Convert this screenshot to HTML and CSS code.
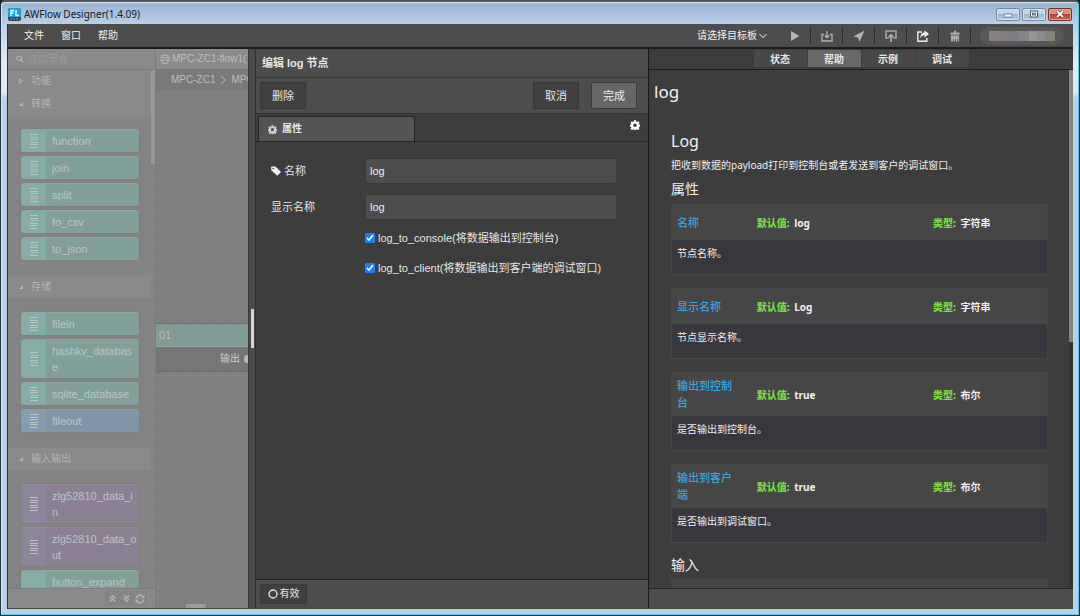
FILE: index.html
```html
<!DOCTYPE html>
<html lang="zh-CN">
<head>
<meta charset="utf-8">
<title>AWFlow Designer(1.4.09)</title>
<link rel="stylesheet" href="styles.css">
</head>
<body>
<svg class="defs" aria-hidden="true">
  <symbol id="gear" viewBox="0 0 16 16"><path fill="currentColor" fill-rule="evenodd" d="M6.300 .5h3.400l.4 2.200 1 .4 1.800-1.200 2.300 2.300-1.200 1.800.4 1 2.100.4v3.200l-2.100.4-.4 1 1.200 1.800-2.300 2.300-1.800-1.200-1 .4-.4 2.200H6.300l-.4-2.200-1-.4-1.800 1.200L.8 13.800 2 12l-.4-1-1.600-.4V7.400L1.600 7 2 6 .8 4.200l2.300-2.300 1.800 1.200 1-.4zM8 5.400a2.800 2.800 0 1 0 0 5.600 2.800 2.800 0 0 0 0-5.600z"/></symbol>
  <symbol id="grip" viewBox="0 0 8 14"><path stroke="currentColor" d="M0 .5h8M0 3.500h8M0 5.500h8M0 8.500h8M0 10.500h8M0 13.500h8"/></symbol>
</svg>
<div class="window">
  <header class="titlebar">
    <svg class="app-logo" viewBox="0 0 13 13" aria-hidden="true"><rect width="13" height="13" rx="2" fill="#3a4650"/><path d="M2 0h9a2 2 0 0 1 2 2v7H0V2a2 2 0 0 1 2-2z" fill="#17a3dc"/><path d="M3 8V2.500h3M3 5h2.500M8 2v5.500h3" stroke="#fff" stroke-width="1.300" fill="none"/><path d="M2 11h9" stroke="#8d969c" stroke-dasharray="2 1"/></svg>
    <span class="title">AWFlow Designer(1.4.09)</span>
    <button class="win-btn" aria-label="最小化"><svg viewBox="0 0 12 8"><rect x="2" y="4" width="8" height="3" rx="1" fill="#fff" stroke="#5b6470" stroke-width=".8"/></svg></button>
    <button class="win-btn" aria-label="最大化"><svg viewBox="0 0 12 8"><rect x="2.500" y="1" width="7" height="6" fill="#fff" stroke="#4d5662"/><rect x="4.500" y="3" width="3" height="2" fill="#8fa9c4" stroke="#4d5662" stroke-width=".8"/></svg></button>
    <button class="win-btn close" aria-label="关闭"><svg viewBox="0 0 12 8"><path d="M3 1l6 6M9 1L3 7" stroke="#5a2a28" stroke-width="3"/><path d="M3 1l6 6M9 1L3 7" stroke="#fff" stroke-width="1.800"/></svg></button>
  </header>
  <div class="app">
    <nav class="menubar">
      <button class="menu">文件</button>
      <button class="menu">窗口</button>
      <button class="menu">帮助</button>
      <button class="target">请选择目标板 <svg viewBox="0 0 8 6"><path d="M.5 1L4 4.700 7.500 1" stroke="currentColor" fill="none"/></svg></button>
      <button class="tool" aria-label="运行"><svg viewBox="0 0 12 12"><path d="M2 1l8.500 5L2 11z" fill="#b5b5b5"/></svg></button>
      <button class="tool" aria-label="下载"><svg viewBox="0 0 12 12"><path d="M3 4.500H1v6.500h10V4.500H9M6 1v6.500M3.800 5.500L6 7.700l2.200-2.200" fill="none" stroke="#b5b5b5" stroke-width="1.300"/></svg></button>
      <button class="tool" aria-label="发送"><svg viewBox="0 0 12 12"><path d="M11.500.5L.5 6.500l4.500 1 1.500 4.500z" fill="#b5b5b5"/></svg></button>
      <button class="tool" aria-label="上传"><svg viewBox="0 0 12 12"><path d="M4 8H1V1h10v7H8" fill="none" stroke="#a5a5a5" stroke-width="1.600"/><path d="M6 12V5M3.800 7L6 4.800l2.200 2.200" fill="none" stroke="#b5b5b5" stroke-width="1.600"/></svg></button>
      <button class="tool" aria-label="分享"><svg viewBox="0 0 12 12"><path d="M5 2H.8v9.200h9V8" fill="none" stroke="#eee" stroke-width="1.400"/><path d="M7.500.3L12 4 7.500 7.500V5.300C5.500 5.300 4.300 6.500 3.500 8.500 3.300 5 4.500 2.700 7.500 2.500z" fill="#eee"/></svg></button>
      <button class="tool" aria-label="清空"><svg viewBox="0 0 12 12"><path d="M5 .5h2v2h3.500v2.300h-9V2.500H5zM2 5.500h8v6H8.700V9H8v2.500H6.600V9H6v2.500H4.600V9H4v2.500H2z" fill="#aaa"/></svg></button>
      <div class="account"><span class="mosaic"></span></div>
    </nav>
    <main class="workspace">
      <aside class="palette">
        <label class="search"><svg viewBox="0 0 10 10"><circle cx="4" cy="4" r="2.800" fill="none" stroke="currentColor" stroke-width="1.400"/><path d="M6 6l3 3" stroke="currentColor" stroke-width="1.600"/></svg><input type="search" placeholder="过滤节点" aria-label="过滤节点"></label>
        <div class="categories">
          <section>
            <h2 class="cat"><svg viewBox="0 0 6 6"><path d="M1.500 .8L4.500 3 1.500 5.200z" fill="none" stroke="currentColor"/></svg>功能</h2>
          </section>
          <section>
            <h2 class="cat"><svg viewBox="0 0 6 6"><path d="M5 1v4H1z" fill="currentColor"/></svg>转换</h2>
            <div class="nodes">
              <div class="node"><span class="grip"><svg><use href="#grip"/></svg></span><span class="name">function</span></div>
              <div class="node"><span class="grip"><svg><use href="#grip"/></svg></span><span class="name">join</span></div>
              <div class="node"><span class="grip"><svg><use href="#grip"/></svg></span><span class="name">split</span></div>
              <div class="node"><span class="grip"><svg><use href="#grip"/></svg></span><span class="name">to_csv</span></div>
              <div class="node"><span class="grip"><svg><use href="#grip"/></svg></span><span class="name">to_json</span></div>
            </div>
          </section>
          <section>
            <h2 class="cat"><svg viewBox="0 0 6 6"><path d="M5 1v4H1z" fill="currentColor"/></svg>存储</h2>
            <div class="nodes">
              <div class="node"><span class="grip"><svg><use href="#grip"/></svg></span><span class="name">filein</span></div>
              <div class="node"><span class="grip"><svg><use href="#grip"/></svg></span><span class="name">hashkv_database</span></div>
              <div class="node"><span class="grip"><svg><use href="#grip"/></svg></span><span class="name">sqlite_database</span></div>
              <div class="node blue"><span class="grip"><svg><use href="#grip"/></svg></span><span class="name">fileout</span></div>
            </div>
          </section>
          <section>
            <h2 class="cat"><svg viewBox="0 0 6 6"><path d="M5 1v4H1z" fill="currentColor"/></svg>输入输出</h2>
            <div class="nodes">
              <div class="node purple"><span class="grip"><svg><use href="#grip"/></svg></span><span class="name">zlg52810_data_in</span></div>
              <div class="node purple"><span class="grip"><svg><use href="#grip"/></svg></span><span class="name">zlg52810_data_out</span></div>
              <div class="node"><span class="grip"></span><span class="name">button_expand</span></div>
            </div>
          </section>
          <span class="thumb"></span>
        </div>
        <footer class="palette-foot">
          <button aria-label="全部折叠"><svg viewBox="0 0 10 10"><path d="M2 5l3-3 3 3M2 8.500l3-3 3 3" fill="none" stroke="currentColor" stroke-width="1.700"/></svg></button>
          <button aria-label="全部展开"><svg viewBox="0 0 10 10"><path d="M2 1.500l3 3 3-3M2 5l3 3 3-3" fill="none" stroke="currentColor" stroke-width="1.700"/></svg></button>
          <button class="refresh" aria-label="刷新"><svg viewBox="0 0 10 10"><path d="M1.200 4.300A3.800 3.800 0 0 1 8 2.800M8.800 5.700A3.800 3.800 0 0 1 2 7.200" fill="none" stroke="currentColor" stroke-width="1.700"/><path d="M9.500.8v3.400H6.100zM.5 9.200V5.800h3.400z" fill="currentColor"/></svg></button>
        </footer>
      </aside>
      <section class="flow">
        <div class="flow-tab"><svg viewBox="0 0 10 10"><path d="M2.500 3.500a2 2 0 0 1 0-2.500h5a2 2 0 0 1 0 2.500M0 3.800h10M0 6.200h10M2.500 6.500a2 2 0 0 0 0 2.800h5a2 2 0 0 0 0-2.800" fill="none" stroke="currentColor"/></svg>MPC-ZC1-flow1(1</div>
        <div class="crumbs"><span>MPC-ZC1</span><svg viewBox="0 0 6 10"><path d="M1 1l4 4-4 4" fill="none" stroke="currentColor"/></svg><span>MPC</span></div>
        <div class="canvas">
          <div class="flow-node"><div class="flow-head">01</div><div class="flow-port">输出<i></i></div></div>
          <span class="hthumb"></span>
        </div>
      </section>
      <div class="splitter"><span></span></div>
      <section class="tray">
        <h1 class="tray-title">编辑 log 节点</h1>
        <div class="actions">
          <button class="btn">删除</button>
          <button class="btn cancel">取消</button>
          <button class="btn primary">完成</button>
        </div>
        <div class="tray-tabs">
          <button class="tray-tab"><svg><use href="#gear"/></svg>属性</button>
          <button class="gear-btn" aria-label="设置"><svg><use href="#gear"/></svg></button>
        </div>
        <form class="form">
          <div class="row"><label for="name"><svg viewBox="0 0 10 10"><path d="M0 1.500Q0 .5 1 .5h3.500L10 6 6.300 9.800.5 4.500z" fill="#eee"/><circle cx="2.200" cy="2.500" r=".8" fill="#3d3d3d"/></svg>名称</label><input id="name" type="text" value="log"></div>
          <div class="row"><label for="display">显示名称</label><input id="display" type="text" value="log"></div>
          <label class="check"><input type="checkbox" checked>log_to_console(将数据输出到控制台)</label>
          <label class="check"><input type="checkbox" checked>log_to_client(将数据输出到客户端的调试窗口)</label>
        </form>
        <footer class="tray-foot"><button class="valid"><svg viewBox="0 0 10 10"><circle cx="5" cy="5" r="4" fill="none" stroke="currentColor" stroke-width="1.300"/></svg>有效</button></footer>
      </section>
      <aside class="side">
        <nav class="side-tabs"><button>状态</button><button class="active">帮助</button><button>示例</button><button>调试</button></nav>
        <div class="help">
          <h1>log</h1>
          <article>
            <h2>Log</h2>
            <p>把收到数据的payload打印到控制台或者发送到客户的调试窗口。</p>
            <h3>属性</h3>
            <div class="props">
              <table><thead><tr><th class="c1">名称</th><th class="c2"><b>默认值:</b> log</th><th><b>类型:</b> 字符串</th></tr></thead><tbody><tr><td colspan="3">节点名称。</td></tr></tbody></table>
              <table><thead><tr><th class="c1">显示名称</th><th class="c2"><b>默认值:</b> Log</th><th><b>类型:</b> 字符串</th></tr></thead><tbody><tr><td colspan="3">节点显示名称。</td></tr></tbody></table>
              <table><thead><tr><th class="c1">输出到控制台</th><th class="c2"><b>默认值:</b> true</th><th><b>类型:</b> 布尔</th></tr></thead><tbody><tr><td colspan="3">是否输出到控制台。</td></tr></tbody></table>
              <table><thead><tr><th class="c1">输出到客户端</th><th class="c2"><b>默认值:</b> true</th><th><b>类型:</b> 布尔</th></tr></thead><tbody><tr><td colspan="3">是否输出到调试窗口。</td></tr></tbody></table>
            </div>
            <h3 class="inputs">输入</h3>
            <div class="next"></div>
          </article>
          <span class="track"><span class="thumb"></span></span>
        </div>
        <footer class="side-foot"></footer>
      </aside>
    </main>
  </div>
</div>
</body>
</html>
```
FILE: styles.css
```css
* { box-sizing: border-box; }
body { margin: 0; background: #1b2026; font: 11px/16px "Liberation Sans", "Noto Sans CJK SC", sans-serif; color: #e6e6e6; }
h1, h2, h3, p { margin: 0; font-weight: normal; }
button { font: inherit; color: inherit; border: 0; padding: 0; background: none; }
svg { display: block; flex: none; }
.defs { position: absolute; width: 0; height: 0; }

.window { height: 100vh; display: flex; flex-direction: column; padding: 0 6px 6px; border: 1px solid #20303c; border-top: 2px solid #4f545a; border-radius: 5px 5px 0 0; background: linear-gradient(#98b2cf, #b9d0ea 22px, #e2ebf5 60px, #dfe9f4 90px, #b9d1ea 96px); box-shadow: inset -1px -1px #54c8e4, inset 1px 1px #dce6f1; }
.titlebar { flex: none; height: 22px; display: flex; align-items: center; gap: 2px; padding: 2px 1px 0 1px; color: #14181d; font: 10px/16px "Noto Sans", "Noto Sans CJK SC", sans-serif; }
.app-logo { width: 13px; height: 13px; margin-right: 1px; }
.title { flex: 1; }
.win-btn { width: 24px; height: 13px; display: grid; place-items: center; border: 1px solid #7188a2; border-radius: 2px; background: linear-gradient(#c3d5e8 50%, #9fb8d2 50%, #b5cce3); box-shadow: inset 0 0 0 1px #d5e2ef; }
.win-btn svg { width: 12px; height: 8px; }
.win-btn.close { background: linear-gradient(#d99184 50%, #b6432f 50%, #cc6b52); border-color: #70302c; box-shadow: inset 0 0 0 1px #dda296; }

.app { flex: 1; min-height: 0; display: flex; flex-direction: column; background: #4d4d4d; border-left: 1px solid #303030; }
.menubar { flex: none; height: 25px; display: flex; align-items: center; background: #4d4d4d; border-bottom: 2px solid #1c1c1c; padding: 0 9px 0 16px; font-size: 10px; color: #f2f2f2; }
.menu { margin-right: 17px; }
.target { margin: 0 12px 0 auto; display: flex; align-items: center; gap: 2px; }
.target svg { width: 8px; height: 6px; }
.tool { width: 32px; height: 17px; display: grid; place-items: center; border-right: 1px solid #2c2c2c; }
.tool svg { width: 12px; height: 12px; }
.account { width: 84px; height: 18px; margin-left: 9px; display: grid; place-items: center; background: #585858; border-radius: 9px; }
.mosaic { width: 66px; height: 10px; background: linear-gradient(90deg, #85817f 0 15%, #857b82 15% 30%, #817c84 30% 45%, #858585 45% 60%, #969690 60% 72%, #8a8d8e 72% 86%, #85857c 86%); }

.workspace { flex: 1; min-height: 0; display: grid; grid-template-columns: 148px 92px 8px minmax(0, 393fr) minmax(0, 424fr); border-bottom: 1px solid #454545; }

.palette { display: flex; flex-direction: column; min-height: 0; background: #848484; color: #b4b4b4; font-size: 10px; border-right: 1px solid #7c7c7c; }
.search { flex: none; height: 21px; display: flex; align-items: center; gap: 4px; padding-left: 8px; background: #8a8a8a; border-bottom: 1px solid #7a7a7a; }
.search svg { width: 8px; height: 8px; }
.search input { flex: 1; min-width: 0; border: 0; padding: 0; background: none; font: inherit; outline: 0; }
.search input::placeholder { color: #9b9b9b; }
.categories { flex: 1; min-height: 0; overflow: hidden; position: relative; padding-right: 4px; }
.cat { height: 23px; display: flex; align-items: center; gap: 10px; padding-left: 10px; background: #8a8a8a; border-bottom: 1px solid #858585; font-size: 10px; }
.cat:first-child svg { margin-right: -3px; }
.cat svg { width: 6px; height: 6px; }
.cat { gap: 7px; padding-left: 10px; }
.cat:first-child svg { margin-right: 0; }
.nodes { display: flex; flex-direction: column; gap: 4px; padding: 13px 12px 16px 13px; }
.node { display: flex; border-radius: 3px; overflow: hidden; background: #81a09a; box-shadow: 0 0 2px #777; font-size: 11px; border-top: 1px solid #8aa9a3; color: #bcc2c0; }
.grip { flex: none; width: 25px; display: grid; place-items: center; background: #85aca6; }
.grip svg { width: 8px; height: 14px; }
.name { flex: 1; padding: 3px 2px 3px 6px; word-break: break-all; }
.blue { background: #8096a6; border-color: #8aa0b0; }
.blue .grip { background: #839db1; }
.purple { background: #8b8193; border-color: #958b9e; }
.purple .grip { background: #8d869b; }
.categories .thumb { position: absolute; top: 0; right: 0; width: 4px; height: 94px; background: #999; }
.palette-foot { flex: none; height: 20px; display: flex; justify-content: flex-end; align-items: center; padding-right: 8px; background: #8a8a8a; border-top: 1px solid #7c7c7c; color: #b0b0b0; }
.palette-foot button { width: 14px; height: 15px; display: grid; place-items: center; background: #858585; }
.palette-foot svg { width: 9px; height: 9px; }
.palette-foot .refresh svg { width: 10px; height: 10px; }

.flow { min-width: 0; min-height: 0; display: flex; flex-direction: column; overflow: hidden; color: #bcbcbc; font-size: 10px; white-space: nowrap; }
.flow-tab { flex: none; height: 21px; display: flex; align-items: center; gap: 2px; padding-left: 4px; background: #8b8b8b; border-bottom: 1px solid #777; }
.flow-tab svg { width: 10px; height: 10px; }
.crumbs { flex: none; height: 20px; display: flex; align-items: center; gap: 5px; padding-left: 15px; background: #7a7a7a; }
.crumbs svg { width: 6px; height: 10px; }
.canvas { flex: 1; position: relative; background: repeating-linear-gradient(90deg, transparent 0 1px, #848484 1px 2px, transparent 2px 16px), repeating-linear-gradient(transparent 0 13px, #848484 13px 14px, transparent 14px 16px), #7f7f7f; }
.flow-node { position: absolute; top: 233px; left: 0; right: 0; border-top: 1px solid #6d6d6d; border-bottom: 1px solid #6d6d6d; background: #767676; }
.flow-head { height: 23px; padding: 3px 3px; background: #819b96; border-bottom: 1px solid #8fa9a3; font-size: 11px; }
.flow-port { height: 24px; display: flex; align-items: center; justify-content: flex-end; gap: 4px; overflow: hidden; color: #ccc; }
.flow-port i { width: 8px; height: 8px; border-radius: 50%; background: #bbb; margin-right: -4px; }
.hthumb { position: absolute; bottom: 0; left: 30px; width: 20px; height: 4px; background: #9c9c9c; }
.splitter { display: flex; align-items: center; justify-content: center; background: #4b4b4b; border-left: 1px solid #393939; border-right: 1px solid #303030; }
.splitter span { width: 3px; height: 39px; background: #d4d4d4; }

.tray { min-width: 0; display: flex; flex-direction: column; background: #3d3d3d; border-right: 1px solid #1a1a1a; }
.tray-title { height: 29px; padding: 6px; background: #4d4d4d; border-bottom: 1px solid #3a3a3a; font-size: 11px; line-height: 16px; font-weight: bold; }
.actions { height: 36px; display: flex; align-items: center; gap: 12px; padding: 0 11px 0 4px; background: #4d4d4d; border-bottom: 1px solid #333; }
.btn { width: 46px; height: 27px; background: #404040; border: 1px solid #363636; border-radius: 2px; }
.cancel { margin-left: auto; }
.primary { background: #666; border-color: #3a3a3a; color: #f2f2f2; }
.tray-tabs { height: 28px; display: flex; align-items: flex-end; justify-content: space-between; padding: 0 2px; border-bottom: 1px solid #282828; }
.tray-tab { width: 157px; height: 25px; display: flex; align-items: center; gap: 5px; padding-left: 9px; background: #545454; border: 1px solid #242424; border-bottom: 0; font-size: 10px; font-weight: bold; }
.tray-tab svg { width: 9px; height: 9px; color: #ccc; }
.gear-btn { align-self: flex-start; width: 23px; height: 22px; display: grid; place-items: center; border: 1px solid #393939; color: #fff; }
.gear-btn svg { width: 10px; height: 10px; }
.form { flex: 1; padding: 16px 31px 0 15px; display: flex; flex-direction: column; }
.row { display: flex; align-items: center; height: 26px; margin-bottom: 10px; }
.row label { flex: none; width: 94px; display: flex; align-items: center; gap: 3px; }
.row svg { width: 10px; height: 10px; }
.row input { flex: 1; min-width: 0; height: 26px; padding: 0 4px; border: 1px solid #3a3a3a; border-radius: 3px; background: #4d4d4d; color: #eee; font: inherit; }
.check { display: flex; align-items: center; gap: 3px; height: 16px; margin: 0 0 14px 94px; white-space: nowrap; }
.check input { width: 10px; height: 10px; margin: 0; accent-color: #0f80ff; }
.tray-foot { height: 29px; padding: 4px; background: #4d4d4d; border-top: 1px solid #222; }
.valid { width: 47px; height: 20px; display: flex; align-items: center; justify-content: center; gap: 2px; background: #404040; border: 1px solid #3a3a3a; border-radius: 2px; font-size: 10px; }
.valid svg { width: 10px; height: 10px; }

.side { min-width: 0; min-height: 0; display: flex; flex-direction: column; background: #3d3d3d; font-family: "Noto Sans", "Noto Sans CJK SC", sans-serif; }
.side-tabs { flex: none; height: 21px; display: flex; justify-content: center; gap: 1px; padding: 1px 0 2px; border-bottom: 1px solid #1d1d1d; font-size: 10px; font-weight: bold; line-height: 16px; }
.side-tabs button { width: 53px; background: #484848; }
.side-tabs .active { background: #686868; }
.help { flex: 1; min-height: 0; position: relative; overflow: hidden; padding: 10px 25px 0 5px; font-size: 10px; color: #f0f0f0; }
.help h1 { font-size: 17px; line-height: 24px; }
.help article { padding: 26px 0 0 17px; }
.help h2 { font-size: 16px; line-height: 22px; }
.help p { line-height: 16px; margin-top: 5px; }
.help h3 { font-size: 14px; line-height: 20px; margin: 6px 0 5px; }
.props { display: flex; flex-direction: column; gap: 13px; }
table { width: 100%; table-layout: fixed; border-collapse: separate; border-spacing: 0; background: #464646; border: 1px solid #454545; border-top: 0; }
th { height: 36px; padding: 2px 8px 0 6px; text-align: left; font-size: 10px; line-height: 16px; font-weight: bold; }
.c1 { width: 21%; font-size: 11px; color: #38a5e3; font-weight: 500; padding: 5px 8px 5px 5px; line-height: 17px; }
.c2 { width: 47%; }
th b { color: #74dc3c; margin-right: 2px; }
td { height: 34px; padding: 5px; background: #38373e; vertical-align: top; line-height: 16px; }
.help h3.inputs { margin: 12px 0 4px; }
.next { height: 36px; background: #464646; }
.track { position: absolute; top: 0; bottom: 0; right: 0; width: 4px; background: #353535; }
.track .thumb { display: block; height: 272px; background: #858585; }
.side-foot { flex: none; height: 20px; background: #4d4d4d; border-top: 1px solid #252525; }
```
